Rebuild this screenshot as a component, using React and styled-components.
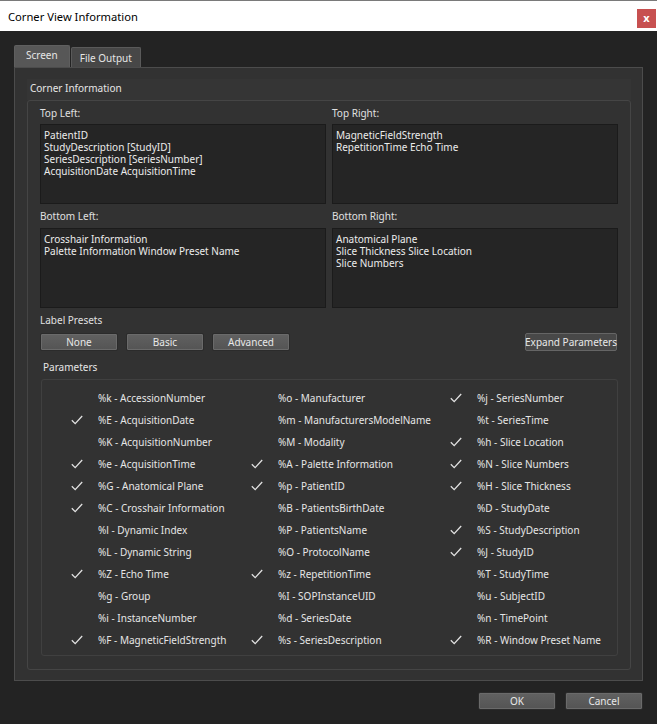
import React from 'react';
import styled, { createGlobalStyle } from 'styled-components';

const GlobalStyle = createGlobalStyle`
  html, body {
    margin: 0;
    padding: 0;
    background: #232323;
  }
  body {
    font-family: "Noto Sans", "Open Sans", sans-serif;
    font-size: 10px;
    color: #e4e4e4;
  }
`;

const Window = styled.div`
  width: 657px;
  height: 724px;
  display: flex;
  flex-direction: column;
  background: #232323;
  overflow: hidden;
`;

const TitleBar = styled.div`
  height: 30px;
  flex-shrink: 0;
  border-top: 1px solid #7a7a7a;
  background: #ffffff;
  display: flex;
  align-items: center;
  justify-content: space-between;
  padding: 0 1px 0 8px;
  color: #000;
  font-size: 11.2px;
`;

const CloseButton = styled.div`
  width: 19px;
  height: 19px;
  margin-top: 4px;
  background: #c75050;
  color: #fff;
  font-weight: bold;
  font-size: 11px;
  display: flex;
  align-items: center;
  justify-content: center;
  line-height: 1;
  padding-bottom: 2px;
  box-sizing: border-box;
`;

const Body = styled.div`
  flex: 1;
  padding: 14px 14px 0 14px;
  display: flex;
  flex-direction: column;
`;

const TabRow = styled.div`
  display: flex;
  align-items: flex-end;
  gap: 1px;
  height: 22px;
  flex-shrink: 0;
`;

const Tab = styled.div`
  height: ${p => (p.$active ? '22px' : '20px')};
  padding: 0 ${p => (p.$active ? '11px' : '8px')};
  box-sizing: border-box;
  display: flex;
  align-items: center;
  background: ${p => (p.$active ? '#575757' : '#474747')};
  border: 1px solid ${p => (p.$active ? '#5f5f5f' : '#5a5a5a')};
  border-bottom: none;
  border-radius: 2px 2px 0 0;
  color: #e6e6e6;
  padding-bottom: ${p => (p.$active ? '3px' : '0')};
`;

const Pane = styled.div`
  width: 629px;
  height: 614px;
  flex-shrink: 0;
  box-sizing: border-box;
  background: #323232;
  border: 1px solid #4c4c4c;
  padding: 11px 11px 10px 12px;
`;

const Group = styled.div`
  display: flex;
  flex-direction: column;
  height: 100%;
`;

const GroupHeader = styled.div`
  height: 21px;
  flex-shrink: 0;
  display: flex;
  align-items: center;
  padding: 0 0 3px 3px;
  box-sizing: border-box;
  background: #353535;
  color: #e6e6e6;
`;

const GroupFrame = styled.div`
  flex: 1;
  min-height: 0;
  border: 1px solid #454545;
  border-radius: 3px;
  padding: 0 12px 13px 12px;
  display: flex;
  flex-direction: column;
`;

const CornerGrid = styled.div`
  display: grid;
  grid-template-columns: 286px 1fr;
  column-gap: 6px;
`;

const FieldLabel = styled.div`
  height: ${p => p.$h || 23}px;
  flex-shrink: 0;
  display: flex;
  align-items: center;
  color: #e0e0e0;
  padding-bottom: ${p => p.$lift || 0}px;
  box-sizing: border-box;
`;

const TextBox = styled.div`
  height: 80px;
  box-sizing: border-box;
  background: #252525;
  border: 1px solid #1b1b1b;
  padding: 4px 3px;
  line-height: 12px;
  color: #ececec;
  white-space: pre;
`;

const PresetRow = styled.div`
  display: flex;
  align-items: center;
  gap: 8px;
  flex-shrink: 0;
`;

const Button = styled.div`
  width: ${p => p.$w || 78}px;
  height: 18px;
  box-sizing: border-box;
  display: flex;
  align-items: center;
  justify-content: center;
  border: 1px solid #2b2b2b;
  border-radius: 2px;
  background: linear-gradient(#616161, #545454);
  box-shadow: inset 0 0 0 1px #6a6a6a;
  color: #e8e8e8;
  white-space: nowrap;
`;

const ExpandButton = styled(Button)`
  margin-left: auto;
  margin-right: 1px;
  background: #484848;
  border-color: #656565;
  box-shadow: none;
`;

const ParamLabel = styled.div`
  height: 28px;
  flex-shrink: 0;
  display: flex;
  align-items: center;
  padding: 3px 0 0 3px;
  box-sizing: border-box;
  color: #e6e6e6;
`;

const ParamFrame = styled.div`
  flex: 1;
  min-height: 0;
  margin-left: 1px;
  border: 1px solid #404040;
  border-radius: 3px;
  padding: 7px 0 0 24px;
  display: grid;
  grid-template-columns: 180px 199px 1fr;
  grid-auto-flow: column;
  grid-template-rows: repeat(12, 22px);
`;

const ParamCell = styled.div`
  display: flex;
  align-items: center;
  gap: 10px;
  color: #e6e6e6;
  white-space: nowrap;
`;

const CheckSlot = styled.div`
  width: 22px;
  display: flex;
  justify-content: center;
`;

const Footer = styled.div`
  display: flex;
  justify-content: flex-end;
  gap: 9px;
  padding-top: 11px;
`;

const Check = () => (
  <svg width="12" height="10" viewBox="0 0 12 10">
    <polyline points="0.8,5.2 4.2,8.6 11.2,1" fill="none" stroke="#e2e2e2" strokeWidth="1.3" />
  </svg>
);

const columns = [
  [
    ['%k - AccessionNumber', false],
    ['%E - AcquisitionDate', true],
    ['%K - AcquisitionNumber', false],
    ['%e - AcquisitionTime', true],
    ['%G - Anatomical Plane', true],
    ['%C - Crosshair Information', true],
    ['%l - Dynamic Index', false],
    ['%L - Dynamic String', false],
    ['%Z - Echo Time', true],
    ['%g - Group', false],
    ['%i - InstanceNumber', false],
    ['%F - MagneticFieldStrength', true],
  ],
  [
    ['%o - Manufacturer', false],
    ['%m - ManufacturersModelName', false],
    ['%M - Modality', false],
    ['%A - Palette Information', true],
    ['%p - PatientID', true],
    ['%B - PatientsBirthDate', false],
    ['%P - PatientsName', false],
    ['%O - ProtocolName', false],
    ['%z - RepetitionTime', true],
    ['%I - SOPInstanceUID', false],
    ['%d - SeriesDate', false],
    ['%s - SeriesDescription', true],
  ],
  [
    ['%j - SeriesNumber', true],
    ['%t - SeriesTime', false],
    ['%h - Slice Location', true],
    ['%N - Slice Numbers', true],
    ['%H - Slice Thickness', true],
    ['%D - StudyDate', false],
    ['%S - StudyDescription', true],
    ['%J - StudyID', true],
    ['%T - StudyTime', false],
    ['%u - SubjectID', false],
    ['%n - TimePoint', false],
    ['%R - Window Preset Name', true],
  ],
];

export default function App() {
  return (
    <>
      <GlobalStyle />
      <Window>
        <TitleBar>
          <span>Corner View Information</span>
          <CloseButton>x</CloseButton>
        </TitleBar>
        <Body>
          <TabRow>
            <Tab $active>Screen</Tab>
            <Tab>File Output</Tab>
          </TabRow>
          <Pane>
            <Group>
              <GroupHeader>Corner Information</GroupHeader>
              <GroupFrame>
                <CornerGrid>
                  <FieldLabel $h={23}>Top Left:</FieldLabel>
                  <FieldLabel $h={23}>Top Right:</FieldLabel>
                  <TextBox>{'PatientID\nStudyDescription [StudyID]\nSeriesDescription [SeriesNumber]\nAcquisitionDate AcquisitionTime'}</TextBox>
                  <TextBox>{'MagneticFieldStrength\nRepetitionTime Echo Time'}</TextBox>
                  <FieldLabel $h={24}>Bottom Left:</FieldLabel>
                  <FieldLabel $h={24}>Bottom Right:</FieldLabel>
                  <TextBox>{'Crosshair Information\nPalette Information Window Preset Name'}</TextBox>
                  <TextBox>{'Anatomical Plane\nSlice Thickness Slice Location\nSlice Numbers'}</TextBox>
                </CornerGrid>
                <FieldLabel $h={25} $lift={1}>Label Presets</FieldLabel>
                <PresetRow>
                  <Button>None</Button>
                  <Button>Basic</Button>
                  <Button>Advanced</Button>
                  <ExpandButton $w={92}>Expand Parameters</ExpandButton>
                </PresetRow>
                <ParamLabel>Parameters</ParamLabel>
                <ParamFrame>
                  {columns.flat().map(([label, on]) => (
                    <ParamCell key={label}>
                      <CheckSlot>{on && <Check />}</CheckSlot>
                      <span>{label}</span>
                    </ParamCell>
                  ))}
                </ParamFrame>
              </GroupFrame>
            </Group>
          </Pane>
          <Footer>
            <Button>OK</Button>
            <Button>Cancel</Button>
          </Footer>
        </Body>
      </Window>
    </>
  );
}
